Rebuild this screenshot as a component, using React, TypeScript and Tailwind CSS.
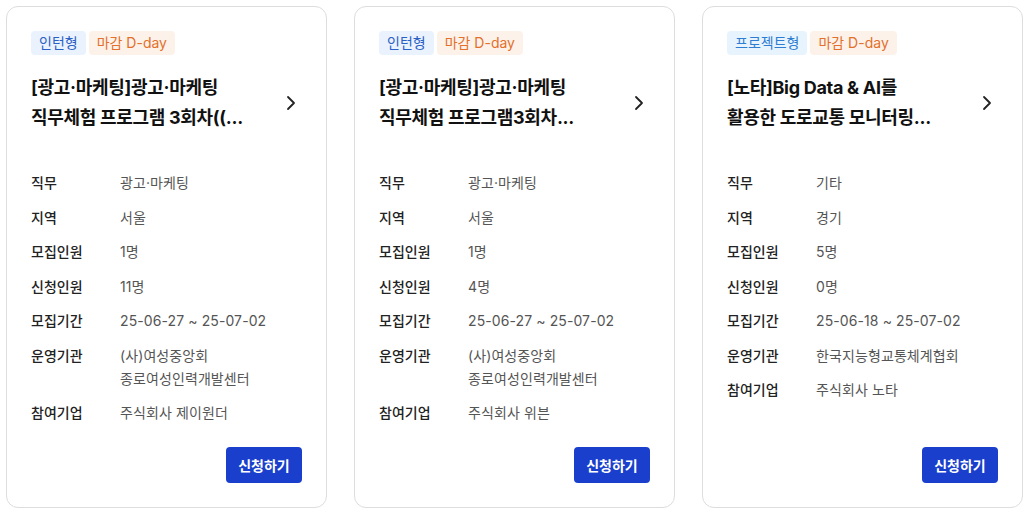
import React from "react";

type Card = {
  type: string;
  typeCls: string;
  title: [string, string];
  rows: [string, string[]][];
};

const cards: Card[] = [
  {
    type: "인턴형",
    typeCls: "bg-[#eaf2fd] text-[#2b60c4]",
    title: ["[광고·마케팅]광고·마케팅", "직무체험 프로그램 3회차((..."],
    rows: [
      ["직무", ["광고·마케팅"]],
      ["지역", ["서울"]],
      ["모집인원", ["1명"]],
      ["신청인원", ["11명"]],
      ["모집기간", ["25-06-27 ~ 25-07-02"]],
      ["운영기관", ["(사)여성중앙회", "종로여성인력개발센터"]],
      ["참여기업", ["주식회사 제이원더"]],
    ],
  },
  {
    type: "인턴형",
    typeCls: "bg-[#eaf2fd] text-[#2b60c4]",
    title: ["[광고·마케팅]광고·마케팅", "직무체험 프로그램3회차..."],
    rows: [
      ["직무", ["광고·마케팅"]],
      ["지역", ["서울"]],
      ["모집인원", ["1명"]],
      ["신청인원", ["4명"]],
      ["모집기간", ["25-06-27 ~ 25-07-02"]],
      ["운영기관", ["(사)여성중앙회", "종로여성인력개발센터"]],
      ["참여기업", ["주식회사 위븐"]],
    ],
  },
  {
    type: "프로젝트형",
    typeCls: "bg-[#e8f4fd] text-[#2d7dd2]",
    title: ["[노타]Big Data & AI를", "활용한 도로교통 모니터링..."],
    rows: [
      ["직무", ["기타"]],
      ["지역", ["경기"]],
      ["모집인원", ["5명"]],
      ["신청인원", ["0명"]],
      ["모집기간", ["25-06-18 ~ 25-07-02"]],
      ["운영기관", ["한국지능형교통체계협회"]],
      ["참여기업", ["주식회사 노타"]],
    ],
  },
];

function JobCard({ c }: { c: Card }) {
  return (
    <div className="w-[321px] h-[502px] shrink-0 flex flex-col border border-[#dddddd] rounded-[12px] bg-white px-6 pt-6 pb-6">
      <div className="flex gap-[3px]">
        <span className={`h-6 px-2 rounded-[4px] text-[14px] leading-6 ${c.typeCls}`}>{c.type}</span>
        <span className="h-6 px-2 rounded-[4px] text-[14px] leading-6 bg-[#fdf2ea] text-[#e2702a]">마감 D-day</span>
      </div>
      <div className="mt-[18px] flex items-center justify-between">
        <div className="text-[18px] font-bold leading-[30px] text-[#111111] tracking-[-0.3px]">
          <div className="whitespace-nowrap">{c.title[0]}</div>
          <div className="whitespace-nowrap">{c.title[1]}</div>
        </div>
        <svg width="24" height="24" viewBox="0 0 24 24" fill="none" stroke="#222222" strokeWidth="1.8" strokeLinecap="round" strokeLinejoin="round" className="mr-[-1px]">
          <path d="m9 18 6-6-6-6" />
        </svg>
      </div>
      <div className="mt-[38px] flex flex-col gap-[11.5px] text-[14px] leading-[23px]">
        {c.rows.map(([k, v]) => (
          <div key={k} className="flex">
            <div className="w-[89px] shrink-0 font-medium text-[#222222]">{k}</div>
            <div className="text-[#555555] tracking-[0.1px]">
              {v.map((line) => (
                <div key={line}>{line}</div>
              ))}
            </div>
          </div>
        ))}
      </div>
      <div className="mt-auto flex justify-end">
        <button className="w-[76px] h-9 rounded-[4px] bg-[#1a3fcc] text-white text-[14px] font-bold">신청하기</button>
      </div>
    </div>
  );
}

export default function App() {
  return (
    <div
      className="w-[1028px] h-[516px] bg-white flex gap-[27px] pl-[6px] pt-[6px]"
      style={{ fontFamily: 'Inter, "Noto Sans CJK KR", sans-serif' }}
    >
      {cards.map((c, i) => (
        <JobCard key={i} c={c} />
      ))}
    </div>
  );
}
